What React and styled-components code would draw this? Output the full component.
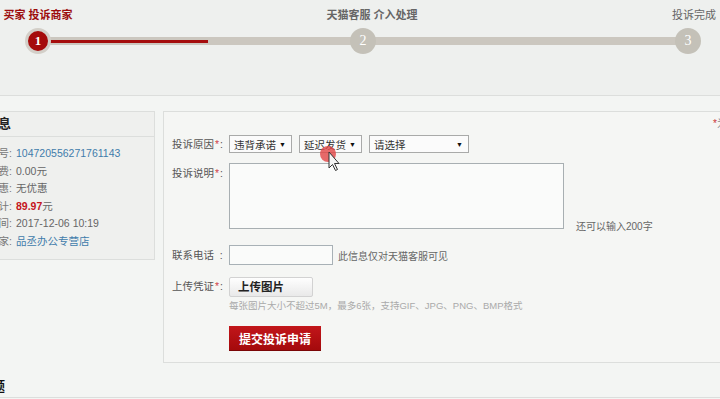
import React from 'react'
import styled, { createGlobalStyle } from 'styled-components'

const GlobalStyle = createGlobalStyle`
  html, body {
    margin: 0;
    padding: 0;
    background: #f3f5f3;
  }
  body {
    font-family: "Liberation Sans", "Noto Sans CJK SC", sans-serif;
    font-size: 10.5px;
    color: #555;
    overflow: hidden;
  }
`

const Page = styled.div`
  position: relative;
  width: 720px;
  height: 399px;
  overflow: hidden;
`

const StepsBar = styled.div`
  height: 95px;
  background: #eef0ee;
  border-bottom: 1px solid #dcdedc;
  overflow: hidden;
`

const Steps = styled.div`
  position: relative;
  display: flex;
  justify-content: space-between;
  width: 726px;
  padding-top: 8px;

  &::before {
    content: '';
    position: absolute;
    left: 38px;
    right: 38px;
    top: 37px;
    height: 8px;
    background: #cbc7bf;
  }
  &::after {
    content: '';
    position: absolute;
    left: 38px;
    top: 40px;
    width: 170px;
    height: 3px;
    background: #a50d0d;
  }
`

const Step = styled.div`
  width: 76px;
  display: flex;
  flex-direction: column;
  align-items: center;
`

const StepLabel = styled.div`
  white-space: nowrap;
  line-height: 14px;
  font-size: 11px;
  font-weight: ${p => (p.$bold ? 700 : 400)};
  color: ${p => (p.$active ? '#9c0c0c' : '#666')};
  margin-bottom: 6px;
  transform: translateX(${p => p.$dx || 0}px);
`

const Circle = styled.div`
  position: relative;
  z-index: 1;
  width: 26px;
  height: 26px;
  border-radius: 50%;
  box-sizing: border-box;
  display: flex;
  align-items: center;
  justify-content: center;
  color: #fff;
  font-size: ${p => (p.$active ? '13px' : '14px')};
  font-weight: ${p => (p.$active ? 700 : 400)};
  font-family: "Liberation Serif", serif;
  background: ${p => (p.$active ? '#a50b0b' : '#c4c1b8')};
  border: ${p => (p.$active ? '3px solid #d3cfc8' : 'none')};
`

const Content = styled.div`
  display: flex;
  align-items: flex-start;
  gap: 8px;
  padding-top: 15px;
`

const InfoPanel = styled.div`
  flex-shrink: 0;
  width: 215px;
  margin-left: -60px;
  background: #eff0ee;
  border: 1px solid #dcdedc;
  box-sizing: border-box;
`

const InfoHead = styled.div`
  height: 24px;
  line-height: 24px;
  padding-left: 18px;
  border-bottom: 1px solid #dcdedc;
  font-size: 13px;
  font-weight: 700;
  color: #222;
`

const InfoList = styled.div`
  padding: 8px 0 8px;
`

const InfoRow = styled.div`
  display: grid;
  grid-template-columns: 71px 1fr;
  line-height: 17.6px;
  white-space: nowrap;
`

const InfoKey = styled.span`
  text-align: right;
  color: #777;
`

const InfoVal = styled.span`
  margin-left: 4px;
  color: ${p => (p.$tone === 'link' ? '#3f7cab' : '#666')};
  b {
    color: #c4141c;
  }
`

const FormPanel = styled.div`
  position: relative;
  flex-shrink: 0;
  width: 600px;
  box-sizing: border-box;
  padding: 23px 0 11px 8px;
  background: #f5f6f4;
  border: 1px solid #dcdedc;
`

const Note = styled.div`
  position: absolute;
  top: 3px;
  left: 549px;
  font-size: 10px;
  color: #888;
  white-space: nowrap;
  span {
    color: #c33;
  }
`

const FormRow = styled.div`
  display: flex;
  align-items: ${p => p.$align || 'flex-start'};
  margin-bottom: ${p => p.$gap || 0}px;
`

const Label = styled.div`
  width: 57px;
  flex-shrink: 0;
  line-height: 18px;
  padding-top: ${p => p.$top || 0}px;
  color: #555;
  white-space: nowrap;
  em {
    font-style: normal;
    color: #d0444a;
    margin: 0 1px;
  }
`

const Selects = styled.div`
  display: flex;
  gap: 7px;
`

const Select = styled.div`
  width: ${p => p.$w}px;
  height: 18px;
  box-sizing: border-box;
  border: 1px solid #a9aaa9;
  background: #fbfbfb;
  display: flex;
  align-items: center;
  justify-content: space-between;
  padding: 0 5px 0 4px;
  color: #333;
  &::after {
    content: '▼';
    font-size: 7px;
    color: #111;
  }
`

const TextArea = styled.div`
  width: 335px;
  height: 66px;
  box-sizing: border-box;
  border: 1px solid #a8afb2;
  background: #fafbfa;
`

const Counter = styled.div`
  align-self: flex-end;
  margin: 0 0 -5px 12px;
  line-height: 14px;
  font-size: 10px;
  color: #666;
`

const Input = styled.div`
  width: 104px;
  height: 20px;
  box-sizing: border-box;
  border: 1px solid #a8b1b6;
  background: #fafbfa;
`

const Hint = styled.span`
  margin-left: 5px;
  font-size: 10px;
  color: #666;
`

const UploadCol = styled.div`
  display: flex;
  flex-direction: column;
`

const UploadButton = styled.div`
  width: 84px;
  height: 20px;
  box-sizing: border-box;
  border: 1px solid #d2d2d2;
  border-radius: 2px;
  background: linear-gradient(#fefefe, #e9e9e9);
  line-height: 18px;
  padding-left: 8px;
  font-size: 11.5px;
  font-weight: 700;
  color: #222;
`

const Tip = styled.div`
  margin-top: 2px;
  line-height: 14px;
  font-size: 9.5px;
  color: #aaa;
  white-space: nowrap;
`

const Submit = styled.div`
  margin: 13px 0 0 57px;
  width: 92px;
  height: 25px;
  box-sizing: border-box;
  background: linear-gradient(#c2161a, #a40a0c);
  border-bottom: 1px solid #7a0606;
  color: #fff;
  font-size: 12px;
  font-weight: 700;
  display: flex;
  align-items: center;
  justify-content: center;
`

const FaqHead = styled.div`
  margin: 14px 0 0 -60px;
  padding-left: 13px;
  height: 20px;
  line-height: 20px;
  font-size: 13px;
  font-weight: 700;
  color: #111;
  border-bottom: 1px solid #dcdedc;
`

const Pointer = styled.svg`
  position: absolute;
  left: 318px;
  top: 144px;
  pointer-events: none;
`

const steps = [
  { label: '买家 投诉商家', n: 1, active: true, bold: true, dx: 0 },
  { label: '天猫客服 介入处理', n: 2, bold: true, dx: 9 },
  { label: '投诉完成', n: 3, dx: 6 },
]

const order = [
  { k: '订单编号', v: '104720556271761143', tone: 'link' },
  { k: '运费', v: '0.00元' },
  { k: '优惠', v: '无优惠' },
  { k: '合计', v: <><b>89.97</b>元</> },
  { k: '成交时间', v: '2017-12-06 10:19' },
  { k: '卖家', v: '品丞办公专营店', tone: 'link' },
]

const App = () => {
  return (
    <Page>
      <GlobalStyle />
      <StepsBar>
        <Steps>
          {steps.map(s => (
            <Step key={s.n}>
              <StepLabel $active={s.active} $bold={s.bold} $dx={s.dx}>{s.label}</StepLabel>
              <Circle $active={s.active}>{s.n}</Circle>
            </Step>
          ))}
        </Steps>
      </StepsBar>

      <Content>
        <InfoPanel>
          <InfoHead>订单信息</InfoHead>
          <InfoList>
            {order.map(o => (
              <InfoRow key={o.k}>
                <InfoKey>{o.k}:</InfoKey>
                <InfoVal $tone={o.tone}>{o.v}</InfoVal>
              </InfoRow>
            ))}
          </InfoList>
        </InfoPanel>

        <FormPanel>
          <Note><span>*</span>为必填项</Note>
          <FormRow $gap={10}>
            <Label>投诉原因<em>*</em>:</Label>
            <Selects>
              <Select $w={63}>违背承诺</Select>
              <Select $w={63}>延迟发货</Select>
              <Select $w={100}>请选择</Select>
            </Selects>
          </FormRow>
          <FormRow $gap={16}>
            <Label $top={1}>投诉说明<em>*</em>:</Label>
            <TextArea />
            <Counter>还可以输入200字</Counter>
          </FormRow>
          <FormRow $gap={12} $align="center">
            <Label>联系电话&nbsp;&nbsp;:</Label>
            <Input />
            <Hint>此信息仅对天猫客服可见</Hint>
          </FormRow>
          <FormRow>
            <Label $top={0}>上传凭证<em>*</em>:</Label>
            <UploadCol>
              <UploadButton>上传图片</UploadButton>
              <Tip>每张图片大小不超过5M，最多6张，支持GIF、JPG、PNG、BMP格式</Tip>
            </UploadCol>
          </FormRow>
          <Submit>提交投诉申请</Submit>
        </FormPanel>
      </Content>

      <FaqHead>常见问题</FaqHead>

      <Pointer width="24" height="28" viewBox="0 0 24 28">
        <circle cx="10" cy="10" r="8" fill="rgba(226,70,70,0.8)" />
        <path d="M11 8 L11 24 L14.5 20.5 L17.5 26.5 L19.5 25.5 L16.5 19.5 L21 19.5 Z" fill="#f4f4f4" stroke="#333" strokeWidth="1" strokeLinejoin="round" />
      </Pointer>
    </Page>
  )
}

export default App
